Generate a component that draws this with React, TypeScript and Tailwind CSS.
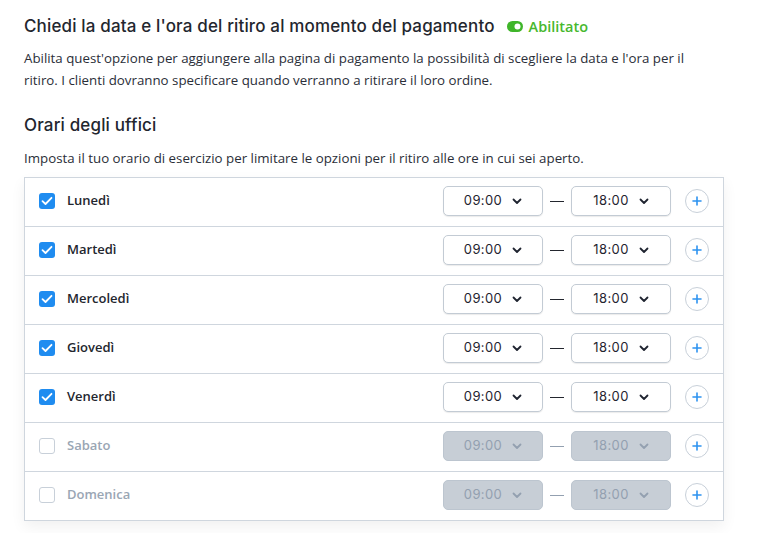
import React from 'react'

type Day = { label: string; enabled: boolean }

const days: Day[] = [
	{ label: 'Lunedì', enabled: true },
	{ label: 'Martedì', enabled: true },
	{ label: 'Mercoledì', enabled: true },
	{ label: 'Giovedì', enabled: true },
	{ label: 'Venerdì', enabled: true },
	{ label: 'Sabato', enabled: false },
	{ label: 'Domenica', enabled: false }
]

const Chevron = ({ muted }: { muted?: boolean }) => (
	<svg width="10" height="7" viewBox="0 0 10 7" className={muted ? 'text-[#93a0b0]' : 'text-[#1f2430]'}>
		<path d="M1.5 1.5 5 5l3.5-3.5" fill="none" stroke="currentColor" strokeWidth="1.8" strokeLinecap="round" strokeLinejoin="round" />
	</svg>
)

const TimeSelect = ({ value, disabled }: { value: string; disabled?: boolean }) => (
	<div
		className={
			disabled
				? 'flex h-[30px] w-[100px] items-center justify-center gap-2.5 rounded-[5px] border border-[#bcc5cf] bg-[#c7ced6] text-[13px] text-[#93a0b0]'
				: 'flex h-[30px] w-[100px] items-center justify-center gap-2.5 rounded-[5px] border border-[#c3cbd4] bg-white text-[13px] text-[#1f2430] shadow-[0_1px_1px_rgba(0,0,0,0.08)]'
		}
	>
		<span className="font-['Inter',sans-serif] tracking-[0.4px]">{value}</span>
		<Chevron muted={disabled} />
	</div>
)

const Checkbox = ({ checked }: { checked: boolean }) =>
	checked ? (
		<span className="flex h-4 w-4 items-center justify-center rounded-[3px] bg-[#1f8cf0]">
			<svg width="12" height="10" viewBox="0 0 12 10">
				<path d="M1.5 5.2 4.5 8 10.5 1.8" fill="none" stroke="white" strokeWidth="1.8" strokeLinecap="round" strokeLinejoin="round" />
			</svg>
		</span>
	) : (
		<span className="h-4 w-4 rounded-[3px] border border-[#c8d0d9] bg-white" />
	)

export default function App() {
	return (
		<div className="min-h-[533px] bg-white px-6 pt-[14px] font-['Open_Sans',sans-serif] text-[#2a2e38]">
			<div className="flex items-center gap-3">
				<h1 className="font-['Inter',sans-serif] text-[17px] font-medium tracking-[0.15px] text-[#23262e]">
					Chiedi la data e l'ora del ritiro al momento del pagamento
				</h1>
				<span className="flex items-center gap-1.5 text-[14.5px] font-semibold text-[#47b82e]">
					<svg width="16" height="11" viewBox="0 0 16 11">
						<rect x="0" y="0" width="16" height="11" rx="5.5" fill="#3fb52a" />
						<circle cx="10.5" cy="5.5" r="3" fill="white" />
					</svg>
					Abilitato
				</span>
			</div>
			<p className="mt-[7px] max-w-[680px] text-[13.3px] leading-[22px] text-[#2a2e38]">
				Abilita quest'opzione per aggiungere alla pagina di pagamento la possibilità di scegliere la data e l'ora per il ritiro. I clienti dovranno specificare quando verranno a ritirare il loro ordine.
			</p>
			<h2 className="mt-[22px] font-['Inter',sans-serif] text-[17px] font-medium tracking-[0.15px] text-[#23262e]">Orari degli uffici</h2>
			<p className="mt-[9px] text-[13.3px] leading-[22px]">
				Imposta il tuo orario di esercizio per limitare le opzioni per il ritiro alle ore in cui sei aperto.
			</p>
			<div className="mt-[8px] w-[700px] border border-[#cfd6de] bg-white shadow-[0_6px_14px_rgba(0,0,0,0.06)]">
				{days.map((d, i) => (
					<div
						key={d.label}
						className={
							i === 0
								? 'flex h-[48px] items-center pb-[2px] pl-[14px] pr-[14px]'
								: 'flex h-[49px] items-center border-t border-[#cfd6de] pb-[2px] pl-[14px] pr-[14px]'
						}
					>
						<Checkbox checked={d.enabled} />
						<span
							className={
								d.enabled
									? 'ml-3 text-[13px] font-semibold text-[#23262e]'
									: 'ml-3 text-[13px] font-semibold text-[#9aa6b4]'
							}
						>
							{d.label}
						</span>
						<div className="ml-auto flex items-center">
							<TimeSelect value="09:00" disabled={!d.enabled} />
							<span className={d.enabled ? 'mx-[7px] h-px w-[14px] bg-[#23262e]' : 'mx-[7px] h-px w-[14px] bg-[#93a0b0]'} />
							<TimeSelect value="18:00" disabled={!d.enabled} />
							<span className="ml-[14px] flex h-6 w-6 items-center justify-center rounded-full border border-[#c8d0d9] bg-white">
								<svg width="10" height="10" viewBox="0 0 10 10">
									<path d="M5 1v8M1 5h8" stroke="#2e93f0" strokeWidth="1.6" strokeLinecap="round" />
								</svg>
							</span>
						</div>
					</div>
				))}
			</div>
		</div>
	)
}
